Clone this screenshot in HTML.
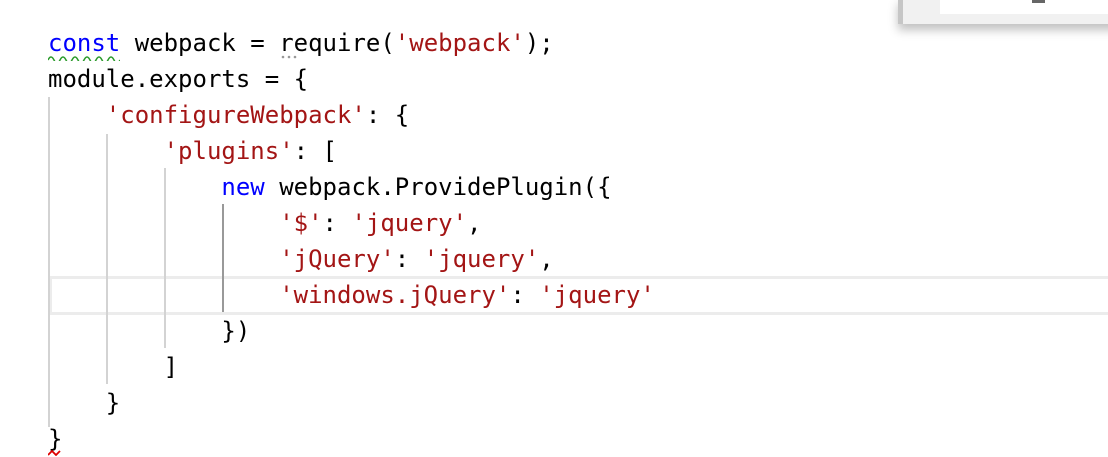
<!DOCTYPE html>
<html><head><style>
body{margin:0;width:1108px;height:456px;background:#fff;overflow:hidden;position:relative;font-family:"DejaVu Sans Mono","Liberation Mono",monospace;font-size:24px}
.l{position:absolute;left:48px;height:36px;line-height:36px;white-space:pre;color:#000}
.k{color:#0000ff}.s{color:#a31515}
.g{position:absolute;width:2px;background:#d3d3d3}
.hl{position:absolute;left:49px;top:276px;width:1070px;height:33px;border:3px solid #ececec;box-sizing:content-box}
.pop{position:absolute;left:898px;top:-2px;width:220px;height:26px;background:#f1f1f1;border-left:5px solid #c6c6c6;box-shadow:0 6px 10px rgba(0,0,0,.25)}
.pop i{position:absolute;left:37px;top:0;right:0;height:16px;background:#fff}
.sq{position:absolute;height:6px}
</style></head><body>
<div class="hl"></div>
<div class="g" style="left:48px;top:97px;height:330px"></div>
<div class="g" style="left:106px;top:134px;height:250px"></div>
<div class="g" style="left:164px;top:168px;height:180px"></div>
<div class="g" style="left:222px;top:204px;height:108px;background:#999"></div>
<div class="l" style="top:25px"><span class="k">const</span> webpack = require(<span class="s">'webpack'</span>);</div>
<div class="l" style="top:61px">module.exports = {</div>
<div class="l" style="top:97px">    <span class="s">'configureWebpack'</span>: {</div>
<div class="l" style="top:133px">        <span class="s">'plugins'</span>: [</div>
<div class="l" style="top:169px">            <span class="k">new</span> webpack.ProvidePlugin({</div>
<div class="l" style="top:205px">                <span class="s">'$'</span>: <span class="s">'jquery'</span>,</div>
<div class="l" style="top:241px">                <span class="s">'jQuery'</span>: <span class="s">'jquery'</span>,</div>
<div class="l" style="top:277px">                <span class="s">'windows.jQuery'</span>: <span class="s">'jquery'</span></div>
<div class="l" style="top:313px">            })</div>
<div class="l" style="top:349px">        ]</div>
<div class="l" style="top:385px">    }</div>
<div class="l" style="top:421px">}</div>
<svg class="sq" style="left:48px;top:55px;width:72px" viewBox="0 0 72 6"><path d="M0 5 q3 -6 6 0 q3 6 6 0 q3 -6 6 0 q3 6 6 0 q3 -6 6 0 q3 6 6 0 q3 -6 6 0 q3 6 6 0 q3 -6 6 0 q3 6 6 0 q3 -6 6 0 q3 6 6 0" fill="none" stroke="#2a9a2a" stroke-width="1.5"/></svg>
<svg class="sq" style="left:281px;top:54px;width:20px" viewBox="0 0 20 6"><circle cx="2" cy="3" r="1.3" fill="#999"/><circle cx="8" cy="3" r="1.3" fill="#999"/><circle cx="14" cy="3" r="1.3" fill="#999"/></svg>
<svg class="sq" style="left:48px;top:450px;width:16px" viewBox="0 0 16 6"><path d="M0 5 l4 -4 l4 4 l4 -4" fill="none" stroke="#d00" stroke-width="1.8"/></svg>
<div class="pop"><i></i><div style="position:absolute;left:129px;top:2px;width:13px;height:3px;background:#666"></div></div>
</body></html>
